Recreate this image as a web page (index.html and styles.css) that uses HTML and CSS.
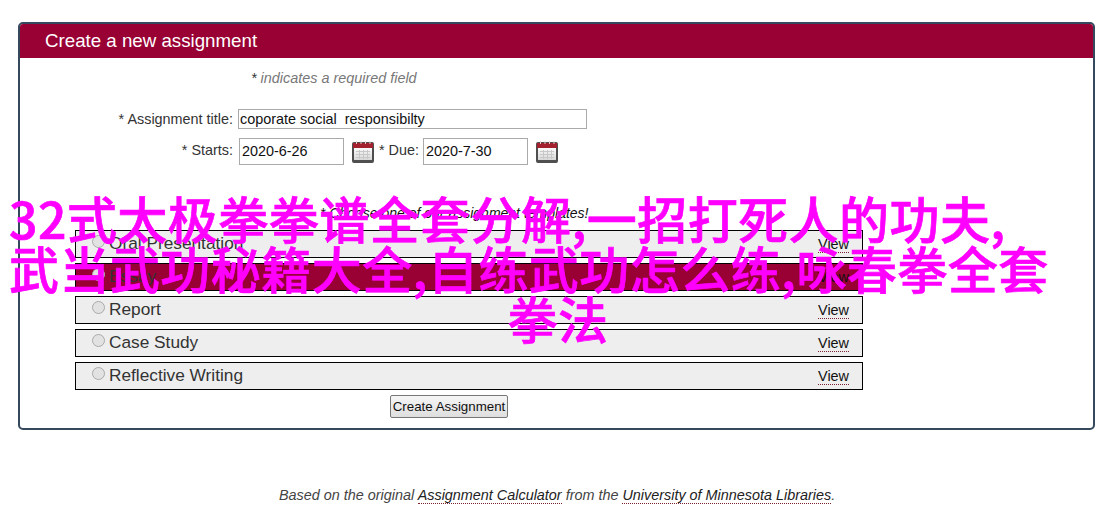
FILE: index.html
```html
<!DOCTYPE html>
<html lang="zh">
<head>
<meta charset="utf-8">
<title>Create a new assignment</title>
<link rel="stylesheet" href="styles.css">
</head>
<body>
<svg class="defs" width="0" height="0" aria-hidden="true">
  <defs>
    <linearGradient id="cal-page" x1="0" y1="0" x2="0" y2="1">
      <stop offset="0" stop-color="#fafafa"/>
      <stop offset="1" stop-color="#d8d8d8"/>
    </linearGradient>
    <symbol id="cal" viewBox="0 0 22 22">
      <rect x="0" y="1" width="22" height="21" rx="2" fill="#4f4f4f"/>
      <rect x="1" y="2" width="20" height="5" fill="#a3202f"/>
      <rect x="2" y="7" width="18" height="12" fill="url(#cal-page)"/>
      <path d="M4 10.5h14M4 13.5h14M4 16.5h14M7.5 9v9M11.5 9v9M15.5 9v9" stroke="#c8c8c8" stroke-width="1"/>
      <path d="M4.5 0v3M9 0v3M13.5 0v3M18 0v3" stroke="#e4d0d0" stroke-width="1"/>
    </symbol>
  </defs>
</svg>
<main class="panel">
  <h1 class="panel-title">Create a new assignment</h1>
  <p class="note"><span class="star">*</span> indicates a required field</p>
  <form class="form">
    <div class="field-row title-row">
      <label class="label label-main" for="title">* Assignment title:</label>
      <input class="input input-title" id="title" type="text" value="coporate social  responsibilty">
    </div>
    <div class="field-row date-row">
      <label class="label label-main" for="starts">* Starts:</label>
      <input class="input input-date" id="starts" type="text" value="2020-6-26">
      <svg class="cal" width="22" height="22"><use href="#cal"/></svg>
      <label class="label label-due" for="due">* Due:</label>
      <input class="input input-date" id="due" type="text" value="2020-7-30">
      <svg class="cal" width="22" height="22"><use href="#cal"/></svg>
    </div>
    <p class="choose">* Choose one of our assignment templates!</p>
    <ul class="templates">
      <li class="template"><span class="radio"></span><span class="template-name">Oral Presentation</span><a class="view">View</a></li>
      <li class="template selected"><span class="radio"></span><span class="template-name">Essay</span><a class="view">View</a></li>
      <li class="template"><span class="radio"></span><span class="template-name">Report</span><a class="view">View</a></li>
      <li class="template"><span class="radio"></span><span class="template-name">Case Study</span><a class="view">View</a></li>
      <li class="template"><span class="radio"></span><span class="template-name">Reflective Writing</span><a class="view">View</a></li>
    </ul>
    <div class="actions"><button class="create" type="button">Create Assignment</button></div>
  </form>
</main>
<footer class="footer">Based on the original <a class="foot-link">Assignment Calculator</a> from the <a class="foot-link">University of Minnesota Libraries</a>.</footer>
<div class="overlay">
  <span class="ov-line">32式太极拳拳谱全套分解,一招打死人的功夫,</span>
  <span class="ov-line">武当武功秘籍大全,自练武功怎么练,咏春拳全套</span>
  <span class="ov-line ov-last">拳法</span>
</div>
</body>
</html>
```
FILE: styles.css
```css
* { box-sizing: border-box; }
html, body { margin: 0; padding: 0; }
body {
  width: 1116px;
  height: 526px;
  overflow: hidden;
  background: #fff;
  color: #333;
  font-family: "Liberation Sans", Arial, sans-serif;
  font-size: 14.4px;
  padding-top: 22px;
  position: relative;
}
.defs { position: absolute; }
.panel {
  width: 1077px;
  height: 408px;
  margin-left: 18px;
  border: 2px solid #34495e;
  border-radius: 5px;
  overflow: hidden;
}
.panel-title {
  margin: 0;
  height: 34px;
  padding-left: 25px;
  background: #990033;
  color: #fff;
  font-size: 18.72px;
  font-weight: normal;
  line-height: 34px;
}
.note {
  margin: 12px 0 0 231px;
  height: 16px;
  line-height: 16px;
  font-style: italic;
  color: #777;
}
.star { color: #333; }
.form { display: block; }
.field-row { display: flex; align-items: center; }
.title-row { margin-top: 23px; height: 20px; }
.date-row { margin-top: 9px; height: 27px; }
.date-row .label { padding-bottom: 3px; }
.label { text-align: right; color: #333; }
.label-main { width: 213px; margin-right: 5px; }
.label-due { margin: 0 6px 0 5px; width: 38px; white-space: nowrap; }
.input {
  height: 100%;
  border: 1px solid #aaa;
  padding: 0 1px;
  font: 14.4px "Liberation Sans", Arial, sans-serif;
  color: #111;
  background: #fff;
  outline: none;
}
.input-title { width: 349px; }
.input-date { width: 105px; padding: 0 2px 2px; }
.date-row .input-date:first-of-type { margin-left: 1px; }
.cal { margin-left: 8px; flex: none; }
.choose {
  margin: 40px 0 0 300px;
  height: 16px;
  line-height: 16px;
  font-style: italic;
  font-size: 14px;
  color: #111;
}
.templates {
  list-style: none;
  margin: 9px 0 0 55px;
  padding: 0;
  width: 788px;
  display: flex;
  flex-direction: column;
  gap: 5px;
}
.template {
  height: 28px;
  border: 1px solid #000;
  background: #eee;
  display: flex;
  align-items: center;
  padding: 0 13px 0 16px;
}
.template.selected { background: #990033; }
.radio {
  width: 13px;
  height: 13px;
  border-radius: 50%;
  border: 1px solid #aaa;
  background: #e2e2e2;
  margin-right: 4px;
  position: relative;
  top: -3px;
}
.template-name {
  font-size: 17.28px;
  color: #333;
  flex: 1;
  position: relative;
  top: -1px;
}
.view {
  font-size: 14.4px;
  color: #111;
  border-bottom: 1px dotted #7a2030;
  line-height: 15px;
  position: relative;
  top: 1px;
}
.actions { display: flex; margin: 5px 0 0 370px; }
.create {
  width: 118px;
  height: 23px;
  padding: 0;
  border: 1px solid #777;
  border-radius: 2px;
  background: linear-gradient(#f6f6f6, #dedede);
  font: 13.33px "Liberation Sans", Arial, sans-serif;
  color: #111;
}
.footer {
  margin: 58px 0 0 279px;
  font-size: 14.4px;
  font-style: italic;
  color: #444;
  line-height: 15px;
}
.foot-link {
  color: #222;
  border-bottom: 1px dotted #7a2030;
}
.overlay {
  position: absolute;
  left: 0;
  top: 192px;
  width: 1116px;
  font-family: "Noto Sans CJK SC", "Liberation Sans", sans-serif;
  font-size: 50px;
  font-weight: 500;
  line-height: 50px;
  letter-spacing: 0.45px;
  -webkit-text-stroke: 0.7px #f0f;
  color: #f0f;
  text-align: left;
  padding-left: 9px;
}
.ov-line { display: block; white-space: nowrap; }
.ov-last { text-align: center; margin-left: -9px; }
```
